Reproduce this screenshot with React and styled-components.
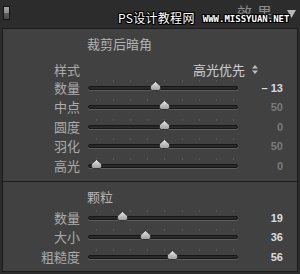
import React from "react";
import styled, { createGlobalStyle } from "styled-components";

const GlobalStyle = createGlobalStyle`
  html, body {
    margin: 0;
    padding: 0;
    background: #2c2c2c;
  }
  body {
    width: 300px;
    height: 274px;
    overflow: hidden;
    font-family: "Noto Sans CJK SC", "Noto Sans", sans-serif;
  }
`;

const Page = styled.div`
  width: 300px;
  height: 274px;
  background: #2c2c2c;
  display: flex;
  flex-direction: column;
`;

const Header = styled.div`
  position: relative;
  height: 28px;
  display: flex;
  align-items: flex-start;
  justify-content: space-between;
  padding: 6px 4px 0 3px;
  box-sizing: border-box;
`;

const Grip = styled.div`
  width: 7px;
  height: 14px;
  box-sizing: border-box;
  border: 1px solid #141414;
  background: linear-gradient(#a5a5a5 0%, #8a8a8a 50%, #5c5c5c 51%, #4a4a4a 100%);
`;

const HeaderRight = styled.div`
  display: flex;
  align-items: center;
  gap: 10px;
  margin-top: -3px;
`;

const HeaderTitle = styled.span`
  font-size: 15px;
  line-height: 18px;
  letter-spacing: 5px;
  color: #8c8c8c;
`;

const Arrow = styled.svg`
  display: block;
  margin-top: 4px;
`;

const Watermark = styled.div`
  position: absolute;
  left: 118px;
  top: 11px;
  display: flex;
  align-items: center;
  gap: 8px;
  color: #fff;
  text-shadow: 1px 0 0 #000, -1px 0 0 #000, 0 1px 0 #000, 0 -1px 0 #000,
    1px 1px 0 #000, -1px -1px 0 #000, 1px -1px 0 #000, -1px 1px 0 #000;
  pointer-events: none;
`;

const WatermarkCn = styled.span`
  font-size: 12px;
  line-height: 14px;
  letter-spacing: 0.3px;
`;

const WatermarkUrl = styled.span`
  font-family: "DejaVu Sans Mono", monospace;
  font-weight: bold;
  font-size: 9px;
  line-height: 10px;
  margin-top: 2px;
`;

const Panel = styled.div`
  margin: 0 2px;
  border: 1px solid #1b1b1b;
  background: #414141;
  display: flex;
  flex-direction: column;
`;

const Section = styled.div`
  padding: 8px 0 ${(p) => p.$bottom}px;
  border-top: ${(p) => (p.$divided ? "1px solid #1b1b1b" : "none")};
`;

const SectionTitle = styled.div`
  padding-left: 84px;
  font-size: 13px;
  line-height: 14px;
  color: #b4b4b4;
  margin-bottom: ${(p) => p.$gap}px;
`;

const Row = styled.div`
  display: flex;
  align-items: center;
  height: ${(p) => p.$h || 19.5}px;
`;

const Label = styled.div`
  width: 77px;
  text-align: right;
  font-size: 13px;
  line-height: 14px;
  color: #ababab;
`;

const SelectBox = styled.div`
  width: 170px;
  margin-left: 8px;
  display: flex;
  justify-content: flex-end;
  align-items: center;
  gap: 7px;
  font-size: 13px;
  line-height: 14px;
  color: #cfcfcf;
`;

const Track = styled.div`
  position: relative;
  width: 150px;
  height: 4px;
  margin-left: 8px;
  box-sizing: border-box;
  border-radius: 2px;
  background: #2a2a2a;
  border: 1px solid #161616;
  box-shadow: 0 1px 0 #5e5e5e;
`;

const Tick = styled.span`
  position: absolute;
  top: -7px;
  width: 1px;
  height: 2px;
  background: #565656;
`;

const Thumb = styled.svg`
  position: absolute;
  top: -6px;
  margin-left: -5.5px;
`;

const Value = styled.div`
  width: 45px;
  text-align: right;
  font-family: "Liberation Sans", Arial, sans-serif;
  font-weight: bold;
  font-size: 11px;
  line-height: 12px;
  color: ${(p) => (p.$dim ? "#7a7a7a" : "#dcdcdc")};
`;

const ticks = [0, 1, 2, 3, 4, 5, 6, 7, 8];

const Slider = ({ label, value, text, min, max, dim }) => {
  const pos = 7 + ((value - min) / (max - min)) * 137;
  return (
    <Row>
      <Label>{label}</Label>
      <Track>
        {ticks.map((t) => (
          <Tick key={t} style={{ left: 7 + t * 17.1 }} />
        ))}
        <Thumb width="11" height="10" viewBox="0 0 11 10" style={{ left: pos }}>
          <defs>
            <linearGradient id="thumbGrad" x1="0" y1="0" x2="0" y2="1">
              <stop offset="0" stopColor="#e8e8e8" />
              <stop offset="1" stopColor="#9c9c9c" />
            </linearGradient>
          </defs>
          <path
            d="M5.5 0.5 L10.5 5 L10.5 7.5 Q10.5 9.5 8.5 9.5 L2.5 9.5 Q0.5 9.5 0.5 7.5 L0.5 5 Z"
            fill="url(#thumbGrad)"
            stroke="#222"
            strokeWidth="0.8"
          />
        </Thumb>
      </Track>
      <Value $dim={dim}>{text ?? value}</Value>
    </Row>
  );
};

const UpDown = () => (
  <svg width="6" height="9" viewBox="0 0 6 9">
    <path d="M3 0 L6 3.5 L0 3.5 Z M0 5.5 L6 5.5 L3 9 Z" fill="#bdbdbd" />
  </svg>
);

const App = () => {
  return (
    <Page>
      <GlobalStyle />
      <Header>
        <Grip />
        <HeaderRight>
          <HeaderTitle>效果</HeaderTitle>
          <Arrow width="9" height="8" viewBox="0 0 9 8">
            <path d="M0 0 L9 0 L4.5 8 Z" fill="#b8b8b8" />
          </Arrow>
        </HeaderRight>
        <Watermark>
          <WatermarkCn>PS设计教程网</WatermarkCn>
          <WatermarkUrl>WWW.MISSYUAN.NET</WatermarkUrl>
        </Watermark>
      </Header>

      <Panel>
        <Section $bottom={5.5}>
          <SectionTitle $gap={10}>裁剪后暗角</SectionTitle>
          <Row $h={17}>
            <Label>样式</Label>
            <SelectBox>
              高光优先
              <UpDown />
            </SelectBox>
          </Row>
          <Slider label="数量" value={-13} text="– 13" min={-100} max={100} />
          <Slider label="中点" value={50} min={0} max={100} dim />
          <Slider label="圆度" value={0} min={-100} max={100} dim />
          <Slider label="羽化" value={50} min={0} max={100} dim />
          <Slider label="高光" value={0} min={0} max={100} dim />
        </Section>
        <Section $divided $bottom={4.5}>
          <SectionTitle $gap={4}>颗粒</SectionTitle>
          <Slider label="数量" value={19} min={0} max={100} />
          <Slider label="大小" value={36} min={0} max={100} />
          <Slider label="粗糙度" value={56} min={0} max={100} />
        </Section>
      </Panel>
    </Page>
  );
};

export default App;
